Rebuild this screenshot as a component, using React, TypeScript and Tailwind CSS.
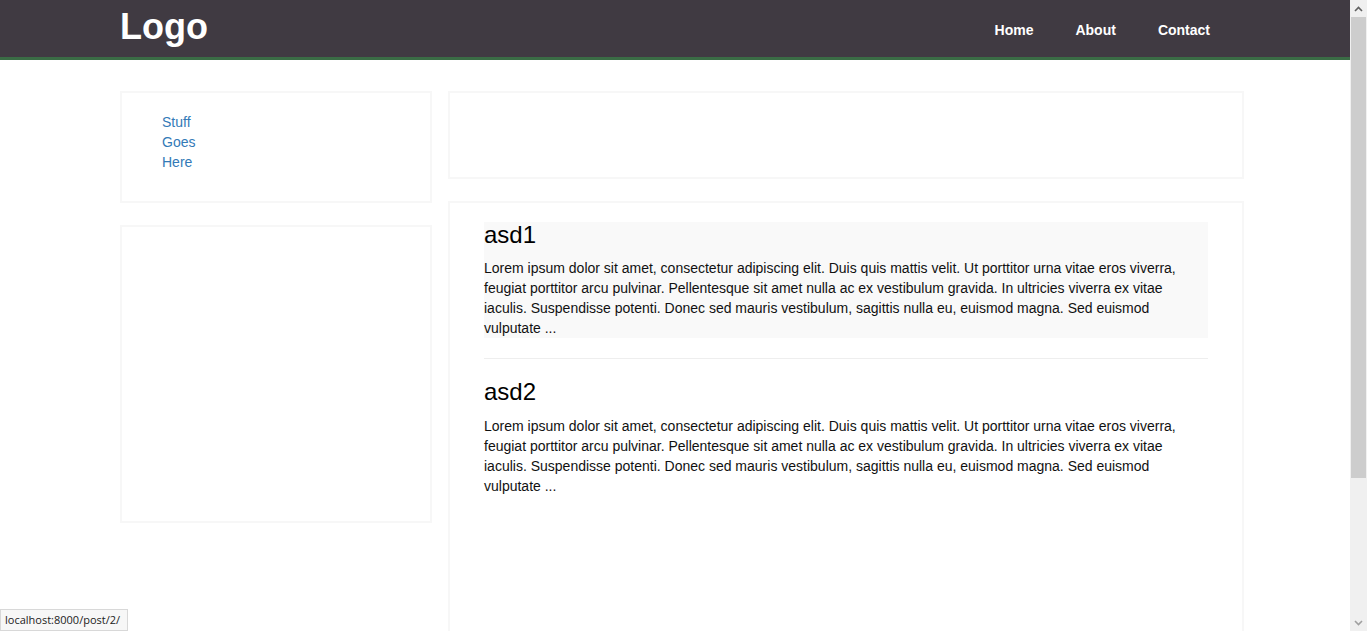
import React from "react";

const lorem =
  "Lorem ipsum dolor sit amet, consectetur adipiscing elit. Duis quis mattis velit. Ut porttitor urna vitae eros viverra, feugiat porttitor arcu pulvinar. Pellentesque sit amet nulla ac ex vestibulum gravida. In ultricies viverra ex vitae iaculis. Suspendisse potenti. Donec sed mauris vestibulum, sagittis nulla eu, euismod magna. Sed euismod vulputate ...";

function Post({ title, active }: { title: string; active?: boolean }) {
  return (
    <div className={active ? "bg-[#f9f9f9]" : ""}>
      <h3 className="text-[24px] leading-[1.1] text-black font-normal">{title}</h3>
      <p className="mt-[10px] text-[14px] leading-[20px] text-[#111]">{lorem}</p>
    </div>
  );
}

export default function App() {
  return (
    <div
      className="relative flex h-[631px] w-[1367px] overflow-hidden bg-white"
      style={{ fontFamily: '"Liberation Sans", Arial, sans-serif' }}
    >
      <div className="flex w-[1350px] flex-col">
        <header className="flex h-[60px] shrink-0 items-center border-b-[3px] border-[#3a6c45] bg-[#403a42] pl-[120px] pr-[119px]">
          <div className="text-[36px] font-bold leading-none text-white -mt-[3px]">Logo</div>
          <nav className="ml-auto mt-[4px] flex text-[14px] font-bold text-white">
            <a className="px-[21px]">Home</a>
            <a className="px-[21px]">About</a>
            <a className="px-[21px]">Contact</a>
          </nav>
        </header>
        <div className="flex gap-[16px] pl-[120px] pt-[31px]">
          <div className="flex w-[312px] flex-col gap-[22px]">
            <div className="h-[112px] border-2 border-[#f7f7f7] pt-[19px]">
              <ul className="pl-[40px] text-[14px] leading-[20px] text-[#337ab7]">
                <li>Stuff</li>
                <li>Goes</li>
                <li>Here</li>
              </ul>
            </div>
            <div className="h-[298px] border-2 border-[#f7f7f7]"></div>
          </div>
          <div className="flex w-[796px] flex-col gap-[22px]">
            <div className="h-[88px] border-2 border-[#f7f7f7]"></div>
            <div className="h-[500px] border-2 border-[#f7f7f7] px-[34px] pt-[19px]">
              <Post title="asd1" active />
              <hr className="mt-[20px] border-t border-[#eeeeee]" />
              <div className="mt-[20px]">
                <Post title="asd2" />
              </div>
            </div>
          </div>
        </div>
      </div>
      <div className="flex w-[17px] flex-col bg-[#f0f0f0]">
        <div className="flex h-[17px] items-center justify-center">
          <svg width="9" height="6" viewBox="0 0 9 6">
            <path d="M1 5 L4.5 1.5 L8 5" fill="none" stroke="#606060" strokeWidth="1.6" />
          </svg>
        </div>
        <div className="mx-[1px] h-[461px] bg-[#cdcdcd]"></div>
        <div className="flex-1"></div>
        <div className="flex h-[17px] items-center justify-center">
          <svg width="9" height="6" viewBox="0 0 9 6">
            <path d="M1 1 L4.5 4.5 L8 1" fill="none" stroke="#a0a0a0" strokeWidth="1.6" />
          </svg>
        </div>
      </div>
      <div
        className="absolute bottom-0 left-0 flex h-[22px] w-[128px] items-center border border-[#d8d8d8] bg-[#f7f7f7] pl-[4px] text-[11px] text-[#222]"
        style={{ fontFamily: '"Open Sans", "Noto Sans", sans-serif' }}
      >
        localhost:8000/post/2/
      </div>
    </div>
  );
}
